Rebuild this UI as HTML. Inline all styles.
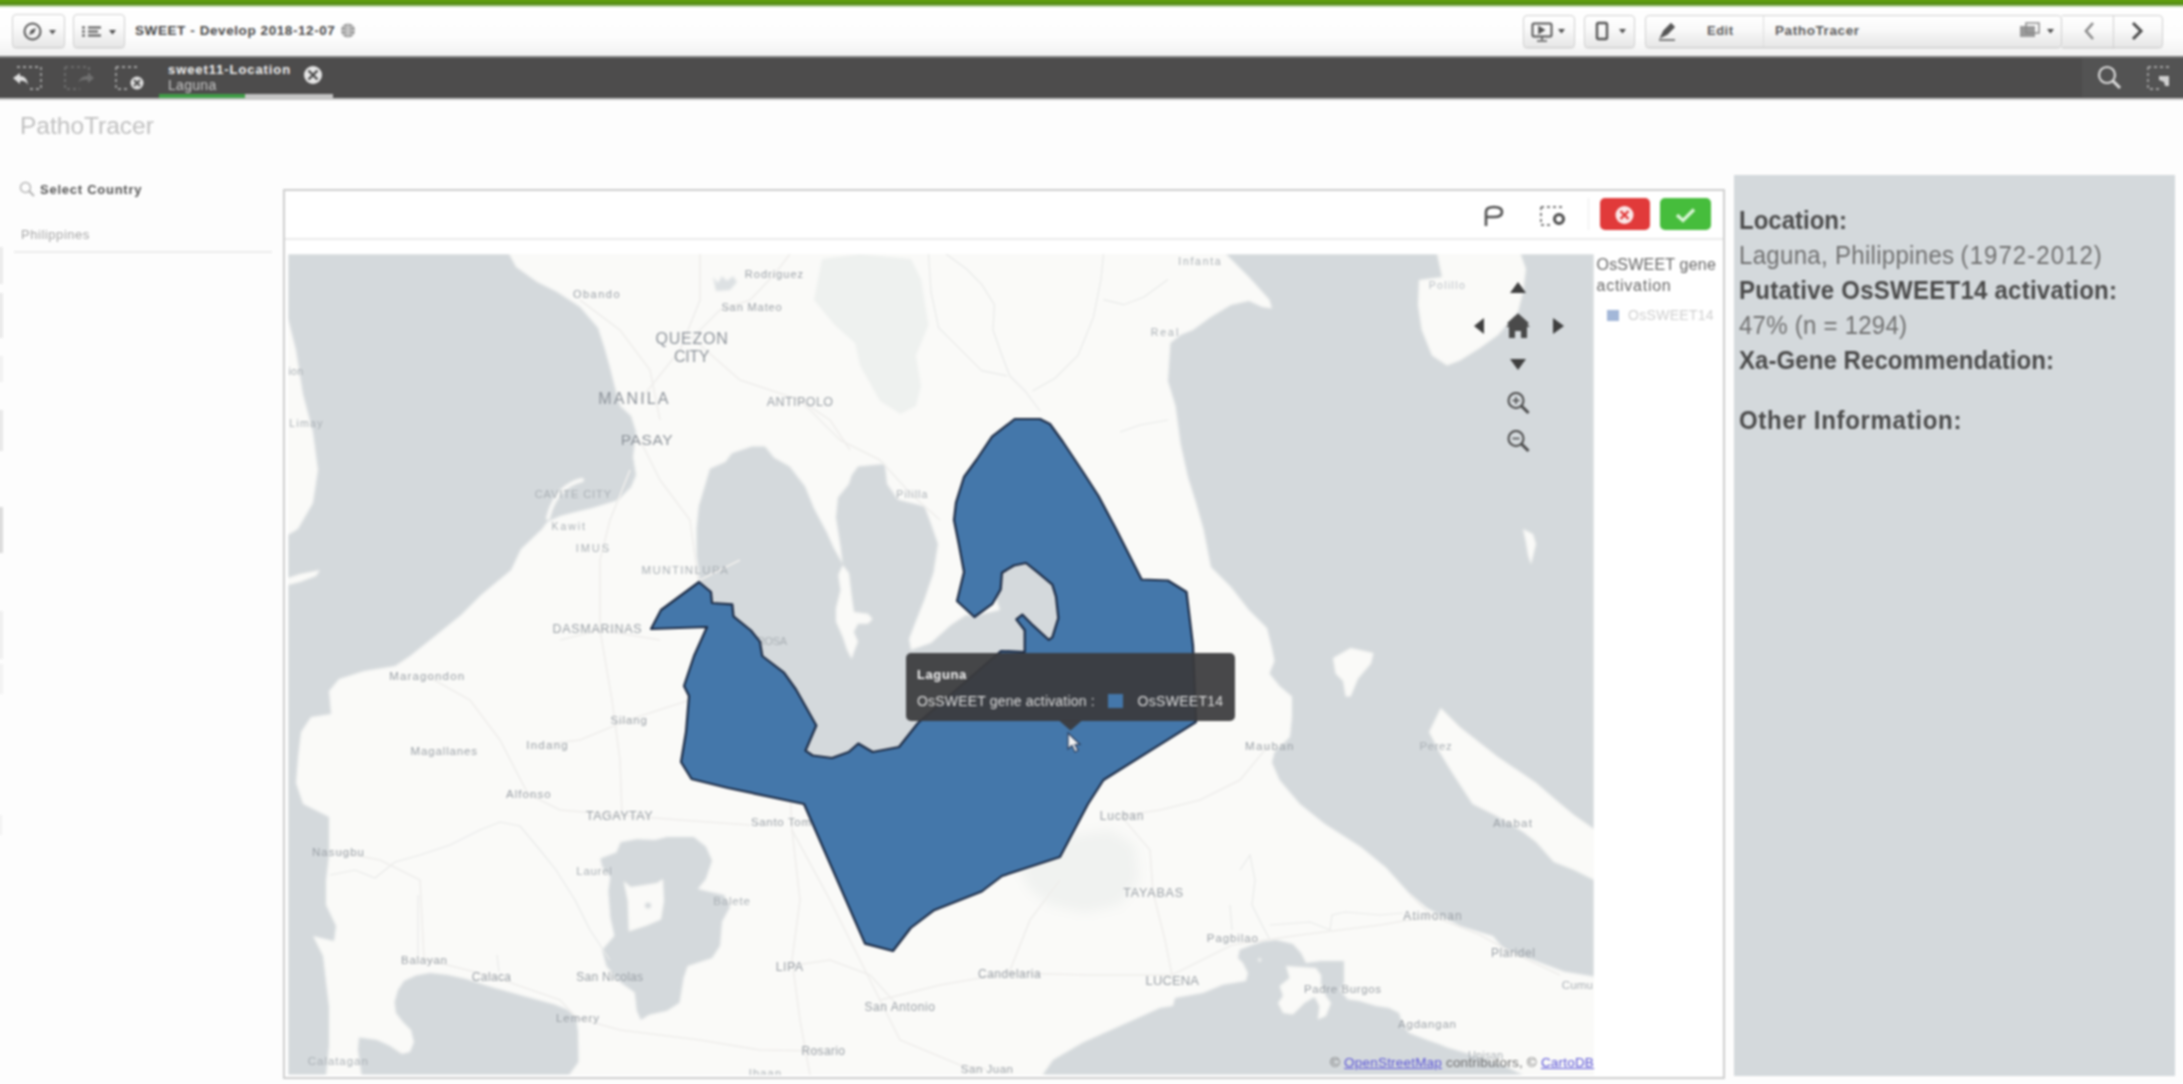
<!DOCTYPE html>
<html><head><meta charset="utf-8"><title>PathoTracer</title>
<style>

html,body{margin:0;padding:0;}
body{width:2183px;height:1084px;overflow:hidden;background:#fdfdfd;font-family:"Liberation Sans",sans-serif;}
#root{filter:blur(0.8px);position:relative;width:2183px;height:1084px;overflow:visible;}
.abs{position:absolute;}
svg text{font-family:"Liberation Sans",sans-serif;}
.t{position:absolute;white-space:nowrap;line-height:1;}
.rp{left:1739px;font-size:24px;color:#6f6f6f;transform:scaleY(1.05);transform-origin:left bottom;}
.rp.b{font-weight:bold;color:#4a4a4a;}
.btn{position:absolute;border:1px solid #d0d0d0;border-radius:4px;background:linear-gradient(#ffffff,#fafafa 40%,#e7e7e7);box-sizing:border-box;box-shadow:0 1px 1px rgba(0,0,0,0.08);}

</style></head>
<body>
<div id="root">

<div class="abs" style="left:-10px;top:-10px;width:2203px;height:15px;background:linear-gradient(#62a00e,#62a00e 66%,#5a9612 85%,#52801c);"></div>
<div class="abs" style="left:-10px;top:5px;width:2203px;height:2px;background:linear-gradient(#a3c584,#c3d9ae);"></div>
<div class="abs" style="left:-10px;top:7px;width:2203px;height:50px;background:linear-gradient(#ffffff 0%,#fdfdfd 60%,#f1f1f1 100%);"></div>
<!-- left buttons -->
<div class="btn" style="left:12px;top:14px;width:53px;height:34px;"></div>
<div class="btn" style="left:73px;top:14px;width:52px;height:34px;"></div>
<svg class="abs" style="left:13px;top:15px" width="112" height="33" viewBox="13 15 112 33">
 <circle cx="32.5" cy="31.5" r="8" fill="none" stroke="#555" stroke-width="2"/>
 <path d="M36,28 L31,30 L29,35 L34,33Z" fill="#555"/>
 <path d="M49,30 L56,30 L52.5,34.5Z" fill="#555"/>
 <path d="M82,27.5h3M82,31.5h3M82,35.5h3M88,27.5h13M88,31.5h10M88,35.5h13" stroke="#555" stroke-width="2" fill="none"/>
 <path d="M109,30 L116,30 L112.5,34.5Z" fill="#4a4a4a"/>
</svg>
<div class="t" style="left:135px;top:24px;font-size:13.5px;font-weight:bold;color:#484848;letter-spacing:0.58px;">SWEET - Develop 2018-12-07</div>
<svg class="abs" style="left:339px;top:22px" width="18" height="18" viewBox="0 0 18 18"><circle cx="9" cy="8.5" r="7" fill="#9a9a9a"/><path d="M2,8.5h14M9,1.5v14M4,4.5q5,3 10,0M4,12.5q5,-3 10,0" stroke="#e6e6e6" stroke-width="1" fill="none"/></svg>
<!-- right buttons -->
<div class="btn" style="left:1523px;top:15px;width:52px;height:33px;"></div>
<div class="btn" style="left:1584px;top:15px;width:51px;height:33px;"></div>
<div class="btn" style="left:1645px;top:15px;width:417px;height:33px;"></div>
<div class="btn" style="left:2062px;top:15px;width:52px;height:33px;border-radius:0;border-left:none;"></div>
<div class="btn" style="left:2113px;top:15px;width:50px;height:33px;border-radius:0 4px 4px 0;"></div>
<div class="abs" style="left:1763px;top:16px;width:1px;height:31px;background:#dcdcdc;"></div>
<svg class="abs" style="left:1523px;top:15px" width="640" height="33" viewBox="1523 15 640 33">
 <rect x="1532.5" y="23.5" width="19" height="13" rx="1.5" fill="none" stroke="#555" stroke-width="2"/>
 <path d="M1539,27 l5,3 l-5,3Z M1542,37v3 M1537,41h10" fill="#555" stroke="#555" stroke-width="1.6"/>
 <path d="M1558,29 L1565,29 L1561.5,33.5Z" fill="#4a4a4a"/>
 <rect x="1597" y="23" width="10" height="16" rx="1.5" fill="none" stroke="#555" stroke-width="2.4"/>
 <path d="M1619,29 L1626,29 L1622.5,33.5Z" fill="#4a4a4a"/>
 <path d="M1661,37 L1664,31 L1671,24 L1674,27 L1667,34Z M1659,40h16" fill="#555" stroke="#555" stroke-width="1.6"/>
 <rect x="2020" y="26" width="15" height="11" fill="#9a9a9a"/><rect x="2026" y="23" width="13" height="10" fill="none" stroke="#8a8a8a" stroke-width="1.5"/>
 <path d="M2047,29 L2054,29 L2050.500,33.5Z" fill="#4a4a4a"/>
 <path d="M2093,23 L2086,31 L2093,39" fill="none" stroke="#8a8a8a" stroke-width="2.6"/>
 <path d="M2133,23 L2141,31 L2133,39" fill="none" stroke="#4a4a4a" stroke-width="3"/>
</svg>
<div class="t" style="left:1707px;top:24px;font-size:13px;font-weight:bold;color:#5c5c5c;letter-spacing:0.5px;">Edit</div>
<div class="t" style="left:1775px;top:24px;font-size:13.5px;font-weight:bold;color:#5a5a5a;letter-spacing:0.6px;">PathoTracer</div>
<!-- dark selection bar -->
<div class="abs" style="left:-10px;top:56px;width:2203px;height:42px;background:#4d4c4c;border-top:2px solid #7a7a7a;box-sizing:border-box;"></div>
<div class="abs" style="left:-10px;top:98px;width:2203px;height:2px;background:#c6c6c6;"></div>
<div class="abs" style="left:2082px;top:58px;width:111px;height:39px;background:#535353;"></div>
<div class="abs" style="left:159px;top:94px;width:86px;height:4px;background:#3f9e46;"></div>
<div class="abs" style="left:245px;top:94px;width:88px;height:4px;background:#c4c4c4;"></div>
<svg class="abs" style="left:0;top:57px" width="2183" height="41" viewBox="0 57 2183 41">
 <g stroke="#a4a4a4" stroke-width="1.8" fill="none" stroke-dasharray="3 3">
  <path d="M17,67 H41 V89 H27"/>
 </g>
 <path d="M13,78 l7,-5 v3 q7,0 8,9 q-3,-5 -8,-4 v3Z" fill="#e0e0e0"/>
 <g stroke="#6c6c6c" stroke-width="2" fill="none" stroke-dasharray="3 3"><path d="M65,67 H89 V75 M65,67 V89 H80"/></g>
 <path d="M78,82 q4,-7 10,-6 v-3 l6,5 l-6,5 v-3 q-5,-1 -10,2Z" fill="#707070"/>
 <g stroke="#a4a4a4" stroke-width="1.8" fill="none" stroke-dasharray="3 3"><path d="M116,67 H140 M116,67 V89 H128"/></g>
 <circle cx="137" cy="83" r="6.5" fill="#e0e0e0"/><path d="M134,80 l6,6 M140,80 l-6,6" stroke="#4c4c4c" stroke-width="1.8"/>
 <circle cx="313" cy="75" r="9" fill="#e6e6e6"/><path d="M308.500,70.500 l9,9 M317.500,70.500 l-9,9" stroke="#4c4c4c" stroke-width="2.4"/>
 <circle cx="2107" cy="75" r="8" fill="none" stroke="#dcdcdc" stroke-width="2.2"/><path d="M2113,81 l7,7" stroke="#dcdcdc" stroke-width="3"/>
 <g stroke="#a4a4a4" stroke-width="1.8" fill="none" stroke-dasharray="3 3"><path d="M2148,67 H2172 M2148,67 V89 H2160"/></g>
 <path d="M2159,76 h10 v10 h-4 l-1,-4 l-5,-2Z" fill="#d0d0d0"/>
</svg>
<div class="t" style="left:168px;top:63px;font-size:13px;font-weight:bold;color:#f0f0f0;letter-spacing:0.92px;">sweet11-Location</div>
<div class="t" style="left:168px;top:78px;font-size:14px;color:#c8c8c8;letter-spacing:0.3px;">Laguna</div>


<div class="t" style="left:20px;top:114px;font-size:24.5px;color:#c0c0c0;letter-spacing:0px;">PathoTracer</div>
<svg class="abs" style="left:18px;top:180px" width="18" height="18" viewBox="0 0 18 18"><circle cx="7.500" cy="7.500" r="5" fill="none" stroke="#b5b5b5" stroke-width="1.500"/><path d="M11,11 l5,5" stroke="#b5b5b5" stroke-width="2"/></svg>
<div class="t" style="left:40px;top:183px;font-size:13px;font-weight:bold;color:#555;letter-spacing:0.75px;">Select Country</div>
<div class="t" style="left:21px;top:228px;font-size:13px;color:#a6a6a6;letter-spacing:0.55px;">Philippines</div>
<div class="abs" style="left:14px;top:251px;width:258px;height:2px;background:#ececec;"></div>
<div class="abs" style="left:-10px;top:247px;width:13px;height:37px;background:#ececec;"></div>
<div class="abs" style="left:-10px;top:293px;width:13px;height:45px;background:#ebebeb;"></div>
<div class="abs" style="left:-10px;top:356px;width:13px;height:26px;background:#f2f2f2;"></div>
<div class="abs" style="left:-10px;top:410px;width:13px;height:41px;background:#e9e9e9;"></div>
<div class="abs" style="left:-10px;top:507px;width:13px;height:46px;background:#dcdcdc;"></div>
<div class="abs" style="left:-10px;top:611px;width:13px;height:48px;background:#f0f0f0;"></div>
<div class="abs" style="left:-10px;top:664px;width:13px;height:30px;background:#f3f3f3;"></div>
<div class="abs" style="left:-10px;top:815px;width:12px;height:20px;background:#f3f3f3;"></div>


<div class="abs" style="left:283px;top:189px;width:1442px;height:890px;border:2px solid #cecece;box-sizing:border-box;background:#fff;"></div>
<div class="abs" style="left:285px;top:238px;width:1438px;height:2px;background:#ebebeb;"></div>
<!-- frame toolbar -->
<svg class="abs" style="left:1470px;top:195px" width="250" height="40" viewBox="1470 195 250 40">
 <path d="M1486,226 V212 q0,-5 8,-5 q8,0 8,5 q0,5 -8,5 h-7" fill="none" stroke="#505050" stroke-width="2.6"/>
 <g stroke="#7a7a7a" stroke-width="2" fill="none" stroke-dasharray="3 3"><path d="M1541,207 H1562 M1541,207 V225 H1552"/></g>
 <circle cx="1559" cy="219" r="4.500" fill="none" stroke="#4a4a4a" stroke-width="3"/>
 <rect x="1588" y="198" width="1" height="32" fill="#ececec"/>
 <rect x="1600" y="198" width="50" height="32" rx="5" fill="#e13a3a"/>
 <circle cx="1624.500" cy="215" r="9" fill="#fbe9e9"/><path d="M1620.500,211 l8,8 M1628.500,211 l-8,8" stroke="#e13a3a" stroke-width="2.400"/>
 <rect x="1660" y="198" width="51" height="32" rx="5" fill="#46bd3c"/>
 <path d="M1677,215 l6,5.500 l11,-11" fill="none" stroke="#d8f5d4" stroke-width="3.400"/>
</svg>

<svg id="map" width="1306" height="821" viewBox="288 254 1306 821" style="position:absolute;left:288px;top:254px;">
<defs><clipPath id="mc"><rect x="288" y="254" width="1306" height="821"/></clipPath><filter id="sb" x="-5%" y="-5%" width="110%" height="110%"><feGaussianBlur stdDeviation="1.1"/></filter><filter id="sb0"><feGaussianBlur stdDeviation="0.6"/></filter><filter id="sb2"><feGaussianBlur stdDeviation="6"/></filter></defs>
<g clip-path="url(#mc)">
<rect x="288" y="254" width="1306" height="821" fill="#fafaf8"/>
<path d="M822.0,259.0 L860.0,254.0 L911.0,259.0 L921.0,279.0 L928.5,325.0 L916.0,355.5 L921.0,386.0 L916.0,406.0 L900.5,414.0 L880.0,401.0 L860.0,365.6 L855.0,343.0 L834.6,325.0 L814.0,300.0Z" fill="#eef1ef" filter="url(#sb)"/>
<path d="M1020.0,870.0 L1040.0,850.0 L1075.0,835.0 L1110.0,830.0 L1135.0,845.0 L1139.0,880.0 L1120.0,905.0 L1085.0,913.0 L1050.0,905.0 L1030.0,890.0Z" fill="#f0f2f0" filter="url(#sb2)"/>
<g filter="url(#sb)">
<path d="M288.0,254.0 L509.0,254.0 L516.0,267.0 L537.0,282.0 L557.0,292.0 L580.0,307.0 L598.0,328.0 L605.0,350.0 L610.0,368.0 L615.0,388.0 L620.0,406.0 L631.0,416.0 L636.0,432.0 L633.0,457.0 L636.0,475.0 L631.0,487.0 L618.0,500.0 L592.0,508.0 L575.0,512.0 L560.0,516.0 L547.0,522.0 L542.0,529.0 L521.0,549.0 L511.0,570.0 L481.0,595.0 L461.0,615.0 L435.0,636.0 L410.0,656.0 L395.0,666.0 L364.0,671.0 L339.0,679.0 L329.0,691.0 L331.0,714.0 L311.0,717.0 L301.0,732.0 L298.0,757.0 L296.0,783.0 L303.0,804.0 L329.0,817.0 L329.0,855.0 L326.0,880.0 L326.0,905.0 L336.0,926.0 L334.0,941.0 L313.0,936.0 L323.0,956.0 L326.0,982.0 L329.0,1007.0 L329.0,1045.0 L326.0,1075.0 L288.0,1075.0 L288.0,535.0 L298.0,529.0 L313.0,503.0 L318.0,470.0 L313.0,432.0 L303.0,394.0 L296.0,350.0 L288.0,318.0Z" fill="#d4d9dc"/>
<path d="M1226.0,254.0 L1249.0,277.0 L1269.5,299.7 L1272.0,308.5 L1262.0,307.0 L1249.0,301.0 L1231.0,305.0 L1211.0,317.0 L1193.0,330.0 L1180.7,335.0 L1170.5,343.0 L1168.0,381.0 L1175.6,406.0 L1180.7,444.0 L1188.0,477.0 L1196.0,502.6 L1203.5,529.0 L1211.0,567.0 L1231.0,587.0 L1249.0,610.0 L1267.0,628.0 L1272.0,648.0 L1274.6,661.0 L1269.5,673.6 L1279.6,686.0 L1292.0,696.5 L1292.0,717.0 L1290.0,737.0 L1274.6,752.0 L1272.0,762.5 L1279.6,780.0 L1300.0,804.0 L1325.0,824.0 L1361.0,847.0 L1386.0,867.5 L1409.0,893.0 L1427.0,908.0 L1460.0,926.0 L1493.0,936.0 L1505.5,951.0 L1536.0,961.0 L1564.0,971.5 L1594.0,976.5 L1594.0,254.0Z" fill="#d4d9dc"/>
<path d="M1042.6,1075.0 L1053.0,1060.0 L1083.0,1042.5 L1134.0,1019.7 L1160.0,1008.0 L1173.0,1006.0 L1175.0,998.0 L1203.0,993.0 L1223.0,984.7 L1246.0,981.0 L1248.0,973.0 L1243.0,963.0 L1238.0,958.0 L1239.7,949.8 L1253.0,944.8 L1263.0,941.5 L1276.0,939.9 L1292.9,944.0 L1301.0,953.0 L1306.0,963.0 L1321.0,961.0 L1344.0,961.0 L1344.0,983.0 L1340.0,990.0 L1347.7,999.6 L1359.0,1001.0 L1376.0,1006.0 L1389.0,1008.0 L1399.0,1013.0 L1402.5,1024.6 L1409.0,1033.0 L1425.7,1039.5 L1440.0,1044.5 L1447.0,1047.6 L1472.5,1055.0 L1498.0,1062.8 L1523.0,1075.0Z" fill="#d4d9dc"/>
<path d="M394.6,1002.0 L398.0,990.0 L404.0,981.0 L416.0,975.5 L430.0,973.0 L448.0,975.0 L466.0,979.0 L491.0,987.0 L516.0,994.0 L554.5,1004.5 L568.0,1010.0 L576.0,1017.0 L578.0,1032.0 L578.5,1062.0 L569.0,1075.0 L361.6,1075.0 L358.0,1050.0 L359.0,1037.5 L377.0,1040.0 L390.0,1046.0 L402.0,1054.0 L410.0,1052.0 L414.0,1042.0 L411.0,1030.0 L403.0,1022.0 L396.0,1013.0Z" fill="#d4d9dc"/>
<path d="M600.3,858.6 L616.5,852.5 L620.6,842.3 L636.8,839.3 L655.0,840.0 L667.0,837.0 L693.7,837.0 L705.8,846.4 L712.0,860.6 L705.8,878.9 L697.7,889.0 L710.0,892.0 L724.0,895.0 L730.0,907.0 L722.0,921.5 L720.0,945.8 L712.0,958.0 L687.6,966.0 L683.5,978.3 L679.5,1002.7 L667.0,1010.8 L649.0,1014.8 L640.9,1020.0 L636.8,1010.8 L634.8,992.5 L620.6,982.4 L606.4,966.0 L602.3,950.0 L614.5,935.7 L610.4,917.4 L608.4,891.0 L610.4,876.8 L602.3,866.7Z" fill="#d4d9dc"/>
<path d="M732.0,453.3 L752.0,446.6 L765.0,446.6 L774.0,457.7 L789.6,466.6 L805.0,486.5 L814.0,508.6 L827.0,533.0 L833.9,548.4 L842.7,564.0 L840.5,546.0 L836.0,517.5 L838.0,497.5 L849.0,484.0 L851.6,475.4 L858.0,466.6 L884.8,464.0 L887.0,484.0 L898.0,499.8 L924.6,506.4 L931.0,524.0 L937.9,544.0 L933.4,572.8 L924.6,599.0 L915.7,621.5 L909.0,639.0 L911.0,650.0 L931.0,643.0 L951.0,625.0 L966.0,615.0 L974.0,616.0 L1000.0,610.0 L990.0,580.0 L1010.0,555.0 L1040.0,560.0 L1065.0,590.0 L1068.0,625.0 L1055.0,650.0 L1030.0,680.0 L960.0,760.0 L870.0,780.0 L800.0,780.0 L760.0,720.0 L720.0,640.0 L705.0,610.0 L700.0,595.0 L698.9,572.8 L696.6,555.0 L696.6,528.5 L698.9,506.0 L705.5,484.0 L710.0,468.8 L725.4,462.0Z" fill="#d4d9dc"/>
<path d="M1440.8,708.0 L1459.8,727.0 L1498.0,757.0 L1536.0,782.7 L1556.0,800.0 L1574.0,815.0 L1594.0,829.0 L1594.0,880.0 L1574.0,870.0 L1553.7,862.0 L1536.0,842.0 L1523.0,832.0 L1498.0,816.7 L1472.5,804.0 L1452.0,772.6 L1439.5,752.0 L1429.0,732.0Z" fill="#fafaf8"/>
<path d="M1437.0,254.0 L1442.0,277.0 L1419.0,280.0 L1418.0,305.0 L1421.7,330.0 L1432.0,355.5 L1447.0,365.6 L1460.0,360.6 L1480.0,348.0 L1498.0,335.0 L1518.0,312.0 L1523.0,292.0 L1526.0,269.0 L1520.7,254.0Z" fill="#fafaf8"/>
<path d="M1333.0,658.0 L1350.7,648.0 L1373.5,653.0 L1371.0,663.5 L1358.0,678.7 L1350.7,696.5 L1345.6,696.5 L1343.0,681.0 L1335.5,673.6Z" fill="#fafaf8"/>
<path d="M1523.0,529.0 L1533.0,534.0 L1536.0,544.0 L1531.0,564.5 L1528.0,555.0 L1525.8,541.7Z" fill="#fafaf8"/>
<path d="M1286.0,966.0 L1316.0,968.0 L1321.0,975.0 L1321.0,984.0 L1326.0,996.0 L1331.0,1003.0 L1326.0,1016.0 L1317.8,1019.6 L1319.4,1006.0 L1314.5,997.0 L1304.5,1003.0 L1293.0,1014.6 L1283.0,1013.0 L1278.0,1003.0 L1283.0,996.0 L1279.6,986.0 L1289.5,978.0Z" fill="#fafaf8"/>
<path d="M623.6,880.9 L630.7,887.0 L657.0,883.0 L663.0,878.9 L664.0,901.0 L661.0,919.4 L647.0,925.5 L628.7,931.6 L627.7,901.0Z" fill="#fafaf8"/>
<path d="M842.7,565.0 L849.0,573.0 L851.6,595.0 L854.0,612.0 L858.0,612.6 L868.0,613.7 L872.6,619.0 L868.0,623.7 L858.0,623.7 L853.8,632.0 L858.0,641.4 L853.8,652.5 L851.6,659.0 L847.0,650.0 L842.7,637.0 L836.0,621.5 L836.0,608.0 L840.5,590.0 L838.3,575.0Z" fill="#fafaf8"/>
<circle cx="648" cy="905.5" r="3" fill="#d4d9dc"/>
<path d="M713,277 L718,283 L722,276 L727,281 L733,276 L737,282 L730,290 L716,291Z" fill="#dde1e3"/>
<circle cx="1259.7" cy="959.8" r="1.6" fill="#fafaf8"/>
<path d="M582,480 Q556,486 548,518" fill="none" stroke="#fafaf8" stroke-width="4" stroke-linecap="round"/>
<path d="M288,578 L300,574 L320,570 L316,576 L300,582 L288,585Z" fill="#fafaf8"/>
</g>
<g fill="none" stroke="#e9eae9" stroke-width="1.2" filter="url(#sb0)"><path d="M946.0,254.0 L966.5,269.0 L981.7,284.4 L994.4,304.7 L993.0,330.0 L1002.0,355.5 L1009.7,375.8 L1025.0,391.0 L1040.0,411.0"/><path d="M1103.5,254.0 L1101.0,279.4 L1093.4,317.4 L1078.0,355.5 L1055.0,378.3 L1032.5,391.0"/><path d="M1103.5,299.7 L1123.8,304.7 L1144.0,297.0 L1168.0,279.4"/><path d="M928.5,254.0 L931.0,292.0 L938.6,327.6 L961.4,350.4 L981.7,370.7 L1007.0,375.8"/><path d="M1168.0,420.0 L1140.0,425.0 L1120.0,432.0"/><path d="M1240.0,870.0 L1250.0,855.0 L1255.0,880.0 L1252.0,905.0 L1262.0,925.0 L1270.0,940.0"/><path d="M1230.0,905.0 L1232.0,930.0"/><path d="M1270.0,925.0 L1310.0,922.0 L1330.0,930.0 L1332.0,915.0 L1345.0,912.0 L1380.0,915.0 L1403.0,913.0"/><path d="M330.0,875.0 L355.0,870.0 L375.0,878.0 L395.0,862.0 L420.0,855.0 L450.0,845.0 L480.0,830.0 L500.0,822.0 L520.0,826.0 L540.0,850.0 L556.0,870.0 L575.0,900.0 L590.0,930.0 L610.0,960.0"/><path d="M418.0,895.0 L418.0,955.0"/><path d="M497.0,955.0 L499.0,972.0"/></g><g fill="none" stroke="#efeeec" stroke-width="1.6" filter="url(#sb0)"><path d="M640.0,440.0 L660.0,480.0 L690.0,520.0 L698.0,580.0 L715.0,640.0 L740.0,690.0 L770.0,740.0 L790.0,790.0 L792.0,830.0 L800.0,900.0 L792.0,960.0 L800.0,1020.0 L810.0,1075.0"/><path d="M630.0,470.0 L610.0,520.0 L600.0,560.0 L600.0,630.0 L612.0,700.0 L620.0,760.0 L622.0,815.0"/><path d="M792.0,830.0 L830.0,900.0 L880.0,1000.0 L940.0,985.0 L1009.0,973.0 L1090.0,975.0 L1172.0,975.0 L1232.0,945.0 L1300.0,935.0 L1380.0,925.0 L1432.0,916.0 L1480.0,935.0 L1513.0,953.0 L1560.0,975.0"/><path d="M692.0,338.0 L720.0,310.0 L750.0,300.0 L774.0,275.0 L790.0,254.0"/><path d="M692.0,338.0 L740.0,380.0 L800.0,400.0 L830.0,420.0 L850.0,450.0"/><path d="M640.0,400.0 L680.0,350.0 L700.0,300.0 L700.0,254.0"/><path d="M580.0,300.0 L620.0,330.0 L650.0,370.0 L660.0,420.0"/><path d="M560.0,640.0 L600.0,630.0 L660.0,640.0"/><path d="M547.0,744.0 L580.0,740.0 L628.0,720.0 L690.0,700.0"/><path d="M427.0,676.0 L470.0,700.0 L500.0,740.0 L528.0,794.0 L560.0,810.0 L619.0,815.0 L680.0,820.0 L750.0,825.0"/><path d="M338.0,852.0 L380.0,860.0 L420.0,880.0 L424.0,959.0 L491.0,976.0 L560.0,1000.0 L577.0,1018.0 L620.0,1030.0 L700.0,1040.0 L760.0,1050.0 L823.0,1051.0"/><path d="M880.0,1000.0 L900.0,1040.0 L960.0,1065.0 L986.0,1069.0"/><path d="M1121.0,816.0 L1150.0,850.0 L1153.0,892.0 L1165.0,940.0 L1172.0,975.0"/><path d="M1009.0,973.0 L1030.0,920.0 L1060.0,880.0"/><path d="M1269.0,745.0 L1240.0,780.0 L1200.0,800.0 L1160.0,810.0 L1121.0,816.0"/><path d="M1432.0,916.0 L1410.0,895.0"/><path d="M789.0,966.0 L830.0,960.0 L870.0,975.0 L899.0,1007.0"/><path d="M700.0,580.0 L740.0,560.0"/><path d="M800.0,400.0 L840.0,440.0 L880.0,460.0 L911.0,494.0 L940.0,520.0"/></g>
<text x="744.8" y="278.2" font-size="11" textLength="58.2" lengthAdjust="spacing" fill="#9ba1a7">Rodriguez</text>
<text x="572.9" y="297.7" font-size="11" textLength="46.7" lengthAdjust="spacing" fill="#9ba1a7">Obando</text>
<text x="721.4" y="311.3" font-size="11" textLength="60.3" lengthAdjust="spacing" fill="#9ba1a7">San Mateo</text>
<text x="655.6" y="344.1" font-size="16" textLength="72.2" lengthAdjust="spacing" fill="#8d939a">QUEZON</text>
<text x="673.9" y="361.6" font-size="16" textLength="35.6" lengthAdjust="spacing" fill="#8d939a">CITY</text>
<text x="598.3" y="403.5" font-size="16" textLength="70.1" lengthAdjust="spacing" fill="#8d939a">MANILA</text>
<text x="766.8" y="406.1" font-size="12.5" textLength="66.2" lengthAdjust="spacing" fill="#9ba1a7">ANTIPOLO</text>
<text x="620.8" y="444.9" font-size="15.5" textLength="51.8" lengthAdjust="spacing" fill="#8d939a">PASAY</text>
<text x="534.7" y="498.0" font-size="11" textLength="76.3" lengthAdjust="spacing" fill="#aab0b5">CAVITE CITY</text>
<text x="551.6" y="529.8" font-size="10.5" textLength="33.2" lengthAdjust="spacing" fill="#aab0b5">Kawit</text>
<text x="575.8" y="552.4" font-size="11" textLength="33.2" lengthAdjust="spacing" fill="#aab0b5">IMUS</text>
<text x="641.6" y="573.7" font-size="11.5" textLength="86.2" lengthAdjust="spacing" fill="#aab0b5">MUNTINLUPA</text>
<text x="896.3" y="497.8" font-size="10.5" textLength="31.0" lengthAdjust="spacing" fill="#aab0b5">Pililla</text>
<text x="552.5" y="633.1" font-size="12.5" textLength="89.1" lengthAdjust="spacing" fill="#9ba1a7">DASMARINAS</text>
<text x="289.3" y="426.8" font-size="10.5" textLength="33.1" lengthAdjust="spacing" fill="#aab0b5">Limay</text>
<text x="288.5" y="374.8" font-size="10.5" textLength="14.5" lengthAdjust="spacing" fill="#aab0b5">ion</text>
<text x="389.2" y="679.8" font-size="11.5" textLength="74.9" lengthAdjust="spacing" fill="#9ba1a7">Maragondon</text>
<text x="610.5" y="724.3" font-size="11.5" textLength="36.4" lengthAdjust="spacing" fill="#9ba1a7">Silang</text>
<text x="410.6" y="755.1" font-size="11.5" textLength="66.4" lengthAdjust="spacing" fill="#9ba1a7">Magallanes</text>
<text x="526.2" y="748.7" font-size="11.5" textLength="41.5" lengthAdjust="spacing" fill="#9ba1a7">Indang</text>
<text x="506" y="798.4" font-size="11.5" textLength="44.6" lengthAdjust="spacing" fill="#9ba1a7">Alfonso</text>
<text x="586" y="819.7" font-size="12.5" textLength="66.5" lengthAdjust="spacing" fill="#9ba1a7">TAGAYTAY</text>
<text x="751" y="826.1" font-size="11.5" textLength="60.0" lengthAdjust="spacing" fill="#9ba1a7">Santo Tom</text>
<text x="312" y="855.7" font-size="11.5" textLength="52.0" lengthAdjust="spacing" fill="#9ba1a7">Nasugbu</text>
<text x="576.3" y="875.4" font-size="11.5" textLength="35.5" lengthAdjust="spacing" fill="#aab0b5">Laurel</text>
<text x="713.3" y="904.5" font-size="11.5" textLength="36.7" lengthAdjust="spacing" fill="#aab0b5">Balete</text>
<text x="401" y="963.6" font-size="11.5" textLength="46.0" lengthAdjust="spacing" fill="#9ba1a7">Balayan</text>
<text x="471.8" y="980.5" font-size="12" textLength="39.2" lengthAdjust="spacing" fill="#9ba1a7">Calaca</text>
<text x="576.3" y="980.5" font-size="12" textLength="66.7" lengthAdjust="spacing" fill="#9ba1a7">San Nicolas</text>
<text x="775.8" y="970.5" font-size="12.5" textLength="27.2" lengthAdjust="spacing" fill="#9ba1a7">LIPA</text>
<text x="556" y="1022.1" font-size="11.5" textLength="43.0" lengthAdjust="spacing" fill="#9ba1a7">Lemery</text>
<text x="307.8" y="1065.1" font-size="11.5" textLength="60.0" lengthAdjust="spacing" fill="#aab0b5">Calatagan</text>
<text x="864.4" y="1011.3" font-size="12" textLength="70.6" lengthAdjust="spacing" fill="#9ba1a7">San Antonio</text>
<text x="801.5" y="1055.3" font-size="12" textLength="43.5" lengthAdjust="spacing" fill="#9ba1a7">Rosario</text>
<text x="960.8" y="1072.8" font-size="11.5" textLength="52.2" lengthAdjust="spacing" fill="#9ba1a7">San Juan</text>
<text x="748.8" y="1077.0" font-size="11" textLength="32.2" lengthAdjust="spacing" fill="#aab0b5">Ibaan</text>
<text x="757" y="644.5" font-size="11" textLength="30.0" lengthAdjust="spacing" fill="#aab0b5">ROSA</text>
<text x="978" y="978.3" font-size="12" textLength="62.6" lengthAdjust="spacing" fill="#9ba1a7">Candelaria</text>
<text x="1245" y="749.6" font-size="11.5" textLength="48.3" lengthAdjust="spacing" fill="#9ba1a7">Mauban</text>
<text x="1419.6" y="749.6" font-size="11.5" textLength="32.1" lengthAdjust="spacing" fill="#aab0b5">Perez</text>
<text x="1099.8" y="820.0" font-size="12" textLength="43.6" lengthAdjust="spacing" fill="#9ba1a7">Lucban</text>
<text x="1493" y="826.6" font-size="11.5" textLength="39.0" lengthAdjust="spacing" fill="#9ba1a7">Alabat</text>
<text x="1123.3" y="896.8" font-size="12.5" textLength="59.7" lengthAdjust="spacing" fill="#9ba1a7">TAYABAS</text>
<text x="1403.3" y="920.3" font-size="12" textLength="58.3" lengthAdjust="spacing" fill="#9ba1a7">Atimonan</text>
<text x="1206.8" y="941.8" font-size="11.5" textLength="51.2" lengthAdjust="spacing" fill="#9ba1a7">Pagbilao</text>
<text x="1491" y="957.3" font-size="12" textLength="44.0" lengthAdjust="spacing" fill="#9ba1a7">Plaridel</text>
<text x="1145.6" y="984.7" font-size="13" textLength="53.4" lengthAdjust="spacing" fill="#9ba1a7">LUCENA</text>
<text x="1304" y="993.1" font-size="11.5" textLength="77.0" lengthAdjust="spacing" fill="#9ba1a7">Padre Burgos</text>
<text x="1398" y="1028.1" font-size="11.5" textLength="58.0" lengthAdjust="spacing" fill="#9ba1a7">Agdangan</text>
<text x="1561.7" y="988.5" font-size="11.5" textLength="31.3" lengthAdjust="spacing" fill="#aab0b5">Cumu</text>
<text x="1468" y="1058.6" font-size="11" textLength="35.0" lengthAdjust="spacing" fill="#aab0b5">Unisan</text>
<text x="1178.3" y="265.3" font-size="10.5" textLength="42.4" lengthAdjust="spacing" fill="#aab0b5">Infanta</text>
<text x="1150.7" y="335.8" font-size="10.5" textLength="27.6" lengthAdjust="spacing" fill="#aab0b5">Real</text>
<text x="1428.7" y="289.1" font-size="10.5" textLength="36.1" lengthAdjust="spacing" fill="#bcc1c6">Polillo</text>
<path d="M1014.7,419.0 L1040.0,419.0 L1050.0,424.0 L1063.0,442.0 L1083.0,472.0 L1098.5,496.0 L1116.0,529.0 L1141.6,579.5 L1168.0,580.5 L1186.5,592.0 L1193.0,645.7 L1196.0,722.0 L1168.0,739.6 L1103.5,780.0 L1088.0,804.0 L1060.0,857.0 L1002.0,876.0 L981.7,891.5 L933.5,910.6 L910.7,928.0 L893.0,951.0 L865.0,943.6 L804.0,804.0 L728.0,788.0 L691.5,779.0 L681.0,762.0 L686.0,732.0 L689.0,696.0 L684.0,686.0 L694.0,656.0 L707.0,627.0 L651.0,629.0 L661.0,610.0 L699.0,582.0 L711.0,592.0 L712.0,603.0 L732.3,604.4 L733.5,616.4 L751.0,630.5 L759.9,641.6 L762.3,656.0 L784.0,672.7 L796.0,689.5 L816.3,725.5 L805.5,750.7 L812.7,755.5 L832.0,758.0 L848.7,752.0 L858.3,743.5 L872.7,752.0 L899.0,747.0 L918.0,723.0 L1001.0,651.0 L1024.7,652.0 L1024.7,630.2 L1016.3,619.4 L1022.3,614.6 L1033.0,625.4 L1048.7,639.8 L1052.3,637.4 L1058.3,618.2 L1056.0,596.6 L1052.3,584.7 L1038.0,572.7 L1026.0,563.0 L1014.0,565.5 L1002.0,572.7 L1000.7,589.4 L992.4,603.8 L974.4,617.0 L957.0,601.0 L964.0,572.0 L958.8,544.0 L954.0,520.0 L956.0,502.6 L964.0,477.0 L976.7,459.5 L992.0,436.7Z" fill="#4477aa" stroke="#1c2b45" stroke-width="2.2" stroke-linejoin="round"/>
</g></svg>

<!-- nav controls -->
<svg class="abs" style="left:1465px;top:275px" width="110" height="185" viewBox="1465 275 110 185">
 <path d="M1510,293 L1518,282 L1526,293Z" fill="#3f3f3f"/>
 <path d="M1510,359 L1518,370 L1526,359Z" fill="#3f3f3f"/>
 <path d="M1484,318 L1474,326 L1484,334Z" fill="#3f3f3f"/>
 <path d="M1553,318 L1564,326 L1553,334Z" fill="#3f3f3f"/>
 <path d="M1506,327 L1518,316 L1530,327 L1527,327 L1527,338 L1521,338 L1521,331 L1515,331 L1515,338 L1509,338 L1509,327Z" fill="#4a4a4a"/>
 <path d="M1508,324 L1518,315 L1528,324" fill="none" stroke="#4a4a4a" stroke-width="2.500"/>
 <circle cx="1516" cy="400.500" r="7.500" fill="none" stroke="#4a4a4a" stroke-width="2"/><path d="M1521.500,406 l7,7" stroke="#4a4a4a" stroke-width="3"/><path d="M1512.500,400.500 h7 M1516,397 v7" stroke="#4a4a4a" stroke-width="1.500"/>
 <circle cx="1516" cy="438.500" r="7.500" fill="none" stroke="#4a4a4a" stroke-width="2"/><path d="M1521.500,444 l7,7" stroke="#4a4a4a" stroke-width="3"/><path d="M1512.500,438.500 h7" stroke="#4a4a4a" stroke-width="1.500"/>
</svg>
<!-- legend -->
<div class="t" style="left:1596.5px;top:257px;font-size:16px;color:#666;letter-spacing:0.2px;transform:scaleY(1.06);transform-origin:left bottom;">OsSWEET gene</div>
<div class="t" style="left:1596.5px;top:277.5px;font-size:16px;color:#666;letter-spacing:0.74px;">activation</div>
<div class="abs" style="left:1607px;top:310px;width:12px;height:11px;background:#a3b7d8;"></div>
<div class="t" style="left:1628px;top:308px;font-size:14px;color:#cfcfcf;letter-spacing:0.3px;">OsSWEET14</div>
<!-- attribution -->
<div class="t" style="left:1330px;top:1056px;font-size:13.5px;letter-spacing:0.2px;color:#6e6e6e;">© <span style="color:#5b55d8;text-decoration:underline;">OpenStreetMap</span> contributors, © <span style="color:#5b55d8;text-decoration:underline;">CartoDB</span></div>
<!-- tooltip -->
<div class="abs" style="left:906px;top:653px;width:329px;height:68px;background:rgba(58,58,60,0.93);border-radius:5px;"></div>
<svg class="abs" style="left:1055px;top:720px" width="32" height="36" viewBox="1055 720 32 36">
 <path d="M1059,720.500 L1082,720.500 L1070.500,730.500Z" fill="rgba(58,58,60,0.93)"/>
 <path d="M1068,733 L1068,749 L1072,745.500 L1075,752 L1078,750.500 L1075,744.500 L1080,744.500Z" fill="#f2f2f2" stroke="#2a3d5c" stroke-width="1.200"/>
</svg>
<div class="t" style="left:917px;top:668px;font-size:13px;font-weight:bold;color:#f4f4f4;letter-spacing:0.6px;">Laguna</div>
<div class="t" style="left:917px;top:694px;font-size:14px;letter-spacing:0.18px;color:#dedede;">OsSWEET gene activation :</div>
<div class="abs" style="left:1108px;top:694px;width:15px;height:14px;background:#4477aa;"></div>
<div class="t" style="left:1137.5px;top:694px;font-size:14px;letter-spacing:0.3px;color:#dedede;">OsSWEET14</div>


<div class="abs" style="left:1734px;top:175px;width:441px;height:901px;background:#d4d9dc;"></div>
<div class="t rp b" style="top:209px;">Location:</div>
<div class="t rp" style="top:244px;"><span style="letter-spacing:0.31px">Laguna, Philippines</span><span style="letter-spacing:1.05px;margin-left:-1.5px"> (1972-2012)</span></div>
<div class="t rp b" style="top:279px;letter-spacing:0.25px;">Putative OsSWEET14 activation:</div>
<div class="t rp" style="top:314px;letter-spacing:0.25px;">47% (n = 1294)</div>
<div class="t rp b" style="top:349px;letter-spacing:0.07px;">Xa-Gene Recommendation:</div>
<div class="t rp b" style="top:409px;letter-spacing:0.69px;">Other Information:</div>

</div>
</body></html>
